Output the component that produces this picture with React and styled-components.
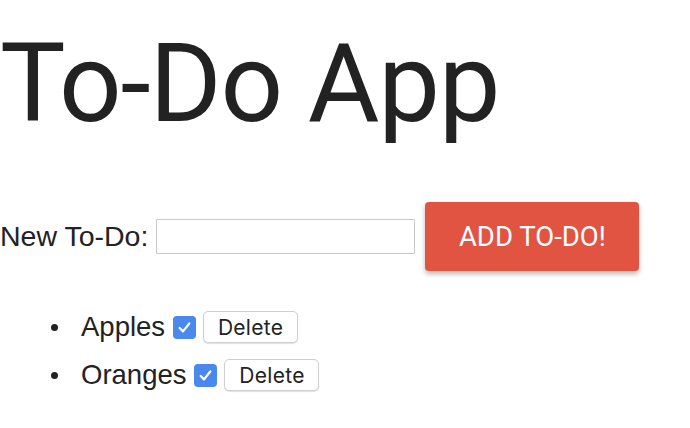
import React, { useState } from "react";
import styled, { createGlobalStyle } from "styled-components";

const GlobalStyle = createGlobalStyle`
  body {
    margin: 0;
    background: #ffffff;
    color: #222222;
    font-family: "Liberation Sans", Arial, sans-serif;
  }
`;

const Page = styled.div`
  width: 690px;
  height: 428px;
  overflow: hidden;
`;

const Title = styled.h1`
  margin: 0;
  padding-top: 19px;
  font-family: Roboto, "Liberation Sans", sans-serif;
  font-weight: 400;
  font-size: 110px;
  line-height: 130px;
  letter-spacing: -1.3px;
  color: #222222;
`;

const Form = styled.form`
  display: flex;
  align-items: center;
  margin-top: 53px;
  height: 69px;
`;

const Label = styled.label`
  font-size: 28.5px;
  color: #222222;
  margin-right: 8px;
`;

const TextInput = styled.input`
  box-sizing: border-box;
  width: 259px;
  height: 35px;
  border: 1.5px solid #c8c8c8;
  border-radius: 1px;
  padding: 0 6px;
  font-size: 20px;
  outline: none;
  margin-right: 10px;
`;

const AddButton = styled.button`
  width: 214px;
  height: 69px;
  border: none;
  border-radius: 4px;
  background: #e15441;
  color: #ffffff;
  font-family: Roboto, "Liberation Sans", sans-serif;
  font-size: 27.5px;
  text-transform: uppercase;
  box-shadow: 0 3px 5px rgba(0, 0, 0, 0.28);
  cursor: pointer;
`;

const List = styled.ul`
  list-style: none;
  margin: 32px 0 0;
  padding: 0 0 0 51px;
`;

const Item = styled.li`
  display: flex;
  align-items: center;
  height: 48px;
  font-size: 27.5px;

  &::before {
    content: "";
    width: 7px;
    height: 7px;
    border-radius: 50%;
    background: #222222;
    margin-right: 23px;
  }
`;

const Check = styled.span`
  display: inline-flex;
  align-items: center;
  justify-content: center;
  width: 23px;
  height: 23px;
  margin-left: 8px;
  border-radius: 4px;
  background: ${(p) => (p.checked ? "#4a88ee" : "#ffffff")};
  border: ${(p) => (p.checked ? "none" : "1px solid #999")};
  cursor: pointer;

  svg {
    width: 15px;
    height: 15px;
  }
`;

const DeleteButton = styled.button`
  box-sizing: border-box;
  width: 95px;
  height: 32px;
  margin-left: 7px;
  border: 1px solid #cfcfcf;
  border-radius: 5px;
  background: #ffffff;
  box-shadow: 0 1px 1px rgba(0, 0, 0, 0.12);
  font-family: Inter, "Liberation Sans", sans-serif;
  font-size: 21px;
  letter-spacing: 0.3px;
  color: #222222;
  cursor: pointer;
`;

const Checkbox = ({ checked, onClick }) => (
  <Check checked={checked} onClick={onClick}>
    {checked && (
      <svg viewBox="0 0 14 14">
        <path
          d="M2.5 7.5 L5.6 10.6 L11.5 3.2"
          fill="none"
          stroke="#ffffff"
          strokeWidth="2.1"
          strokeLinecap="round"
          strokeLinejoin="round"
        />
      </svg>
    )}
  </Check>
);

const App = () => {
  const [todos, setTodos] = useState([
    { id: 1, text: "Apples", done: true },
    { id: 2, text: "Oranges", done: true },
  ]);
  const [draft, setDraft] = useState("");

  const add = (e) => {
    e.preventDefault();
    if (!draft.trim()) return;
    setTodos([...todos, { id: Date.now(), text: draft, done: false }]);
    setDraft("");
  };

  const toggle = (id) =>
    setTodos(todos.map((t) => (t.id === id ? { ...t, done: !t.done } : t)));

  const remove = (id) => setTodos(todos.filter((t) => t.id !== id));

  return (
    <Page>
      <GlobalStyle />
      <Title>To-Do App</Title>
      <Form onSubmit={add}>
        <Label htmlFor="new-todo">New To-Do:</Label>
        <TextInput
          id="new-todo"
          value={draft}
          onChange={(e) => setDraft(e.target.value)}
        />
        <AddButton type="submit">Add To-Do!</AddButton>
      </Form>
      <List>
        {todos.map((t) => (
          <Item key={t.id}>
            {t.text}
            <Checkbox checked={t.done} onClick={() => toggle(t.id)} />
            <DeleteButton onClick={() => remove(t.id)}>Delete</DeleteButton>
          </Item>
        ))}
      </List>
    </Page>
  );
};

export default App;
